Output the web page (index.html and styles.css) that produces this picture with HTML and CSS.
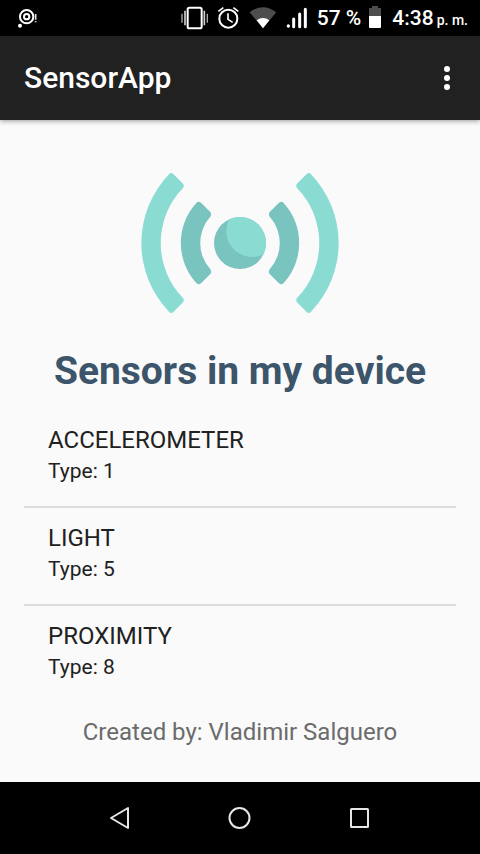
FILE: index.html
```html
<!DOCTYPE html>
<html lang="en">
<head>
<meta charset="utf-8">
<meta name="viewport" content="width=device-width, initial-scale=1">
<title>SensorApp</title>
<link rel="stylesheet" href="styles.css">
</head>
<body>
<div class="screen">
  <div class="status-bar">
    <svg class="notice" width="24" height="36" viewBox="48 0 72 108" aria-hidden="true">
      <circle cx="80" cy="50" r="20" fill="none" stroke="#fff" stroke-width="6"/>
      <circle cx="80" cy="50" r="8" fill="none" stroke="#fff" stroke-width="6"/>
      <circle cx="60" cy="77" r="6" fill="#fff"/>
      <path d="M107 42v17M107 63v4" stroke="#ddd" stroke-width="5"/>
    </svg>
    <svg width="28" height="36" viewBox="33 0 84 108" aria-hidden="true">
      <rect x="53" y="23" width="42" height="62" rx="5" fill="none" stroke="#fff" stroke-width="6"/>
      <path d="M45 32v44M103 32v44" stroke="#ccc" stroke-width="5"/>
      <path d="M36 41v27M112 41v27" stroke="#aaa" stroke-width="4"/>
    </svg>
    <svg width="24" height="36" viewBox="140 0 72 108" aria-hidden="true">
      <g fill="none" stroke="#fff" stroke-width="6">
        <circle cx="174" cy="56" r="27"/>
        <path stroke-width="5" d="M173 40v18l14 9M144 34l15-11M204 34l-15-11"/>
      </g>
    </svg>
    <svg width="28" height="36" viewBox="234 0 84 108" aria-hidden="true">
      <path d="M236 37Q276 6 316 37L276 85Z" fill="#4d4d4d"/>
      <path d="M257 61Q276 47 295 61L276 85Z" fill="#fff"/>
    </svg>
    <svg width="24" height="36" viewBox="342 0 72 108" aria-hidden="true">
      <circle cx="352" cy="78" r="5" fill="#fff"/>
      <path d="M368 57v23M386 42v38M403 28v52" stroke="#fff" stroke-width="9" stroke-linecap="round"/>
    </svg>
    <span class="battery-level">57 %</span>
    <svg class="battery" width="12" height="36" viewBox="174 0 36 108" aria-hidden="true">
      <path d="M174 49V24h9v-6h18v6h9v25Z" fill="#4d4d4d"/>
      <path d="M174 48h36v33q0 3-3 3h-30q-3 0-3-3Z" fill="#fff"/>
    </svg>
    <span class="clock">4:38<small class="period">p. m.</small></span>
  </div>

  <header class="app-bar">
    <h1 class="app-title">SensorApp</h1>
    <button class="menu-button" type="button" aria-label="More options">
      <svg width="8" height="26" viewBox="0 0 8 26" fill="#fff" aria-hidden="true">
        <circle cx="4" cy="4" r="3"/><circle cx="4" cy="13" r="3"/><circle cx="4" cy="22" r="3"/>
      </svg>
    </button>
  </header>

  <main class="content">
    <svg class="logo" width="198" height="140" viewBox="33 39 594 420" aria-hidden="true">
      <defs>
        <clipPath id="ball"><circle cx="330" cy="249" r="78"/></clipPath>
        <path id="wave-outer" d="M117 43Q123 36 130 42L159 71Q164 77 159 84A237 237 0 0 0 159 414Q164 421 159 427L130 456Q123 462 117 455A297 297 0 0 1 117 43Z"/>
        <path id="wave-inner" d="M199 129Q206 122 213 128L241 156Q246 163 241 170A118 118 0 0 0 241 328Q246 335 241 342L213 370Q206 376 199 369A178 178 0 0 1 199 129Z"/>
      </defs>
      <g fill="#8adcd3">
        <use href="#wave-outer"/>
        <use href="#wave-outer" transform="translate(660 0) scale(-1 1)"/>
      </g>
      <g fill="#7ac4bf">
        <use href="#wave-inner"/>
        <use href="#wave-inner" transform="translate(660 0) scale(-1 1)"/>
        <circle cx="330" cy="249" r="78"/>
      </g>
      <circle cx="367" cy="213" r="78" fill="#8adcd3" clip-path="url(#ball)"/>
    </svg>
    <h2 class="heading">Sensors in my device</h2>
    <ul class="sensors">
      <li class="sensor"><span class="name">ACCELEROMETER</span><span class="type">Type: 1</span></li>
      <li class="sensor"><span class="name">LIGHT</span><span class="type">Type: 5</span></li>
      <li class="sensor"><span class="name">PROXIMITY</span><span class="type">Type: 8</span></li>
    </ul>
    <footer class="credit">Created by: Vladimir Salguero</footer>
  </main>

  <nav class="nav-bar" aria-label="System">
    <button class="nav-button" type="button" aria-label="Back">
      <svg width="24" height="24" viewBox="0 0 24 24" aria-hidden="true"><path d="M20 2V22L3 12Z"/></svg>
    </button>
    <button class="nav-button" type="button" aria-label="Home">
      <svg width="24" height="24" viewBox="0 0 24 24" aria-hidden="true"><circle cx="11.500" cy="12" r="10"/></svg>
    </button>
    <button class="nav-button" type="button" aria-label="Recent apps">
      <svg width="24" height="24" viewBox="0 0 24 24" aria-hidden="true"><rect x="3" y="3" width="17" height="18" rx="0.500"/></svg>
    </button>
  </nav>
</div>
</body>
</html>
```
FILE: styles.css
```css
* {
  box-sizing: border-box;
}

body {
  margin: 0;
  background: #fafafa;
  color: #212121;
  font-family: Roboto, "Liberation Sans", sans-serif;
}

svg {
  display: block;
  flex: none;
}

button {
  display: flex;
  align-items: center;
  justify-content: center;
  padding: 0;
  border: 0;
  background: none;
}

.screen {
  display: flex;
  flex-direction: column;
  min-height: 100vh;
}

.status-bar {
  display: flex;
  align-items: center;
  gap: 8px;
  padding: 0 12px 0 16px;
  background: #000;
  color: #fff;
  font-size: 21px;
  font-weight: 500;
  line-height: 36px;
  white-space: nowrap;
}

.notice {
  margin-right: auto;
}

.clock {
  margin-left: 3px;
}

.period {
  margin-left: 3px;
  font-size: 14px;
  line-height: 1;
}

.app-bar {
  display: flex;
  align-items: center;
  justify-content: space-between;
  height: 84px;
  padding: 0 16px 0 24px;
  background: #212121;
  color: #fff;
  box-shadow: 0 1px 5px rgba(0, 0, 0, 0.4);
}

.app-title {
  margin: 0;
  font-size: 30px;
  font-weight: 500;
  line-height: 36px;
}

.menu-button {
  width: 34px;
  height: 48px;
}

.content {
  display: flex;
  flex: 1;
  flex-direction: column;
  padding: 53px 24px 24px;
}

.logo {
  align-self: center;
}

.heading {
  margin: 35px 0 15px;
  color: #3c556a;
  font-size: 39px;
  font-weight: 700;
  line-height: 47px;
  text-align: center;
}

.sensors {
  margin: 0;
  padding: 0;
  list-style: none;
}

.sensor {
  display: flex;
  flex-direction: column;
  gap: 5px;
  height: 96px;
  padding: 16px 24px;
}

.sensor + .sensor {
  height: 98px;
  border-top: 2px solid #dcdcdc;
}

.name {
  font-size: 24px;
  line-height: 28px;
}

.type {
  font-size: 21px;
  line-height: 25px;
}

.credit {
  margin-top: 16px;
  color: #6b6b6b;
  font-size: 24px;
  line-height: 28px;
  text-align: center;
}

.nav-bar {
  display: flex;
  justify-content: center;
  height: 72px;
  background: #000;
}

.nav-button {
  flex: 0 1 120px;
}

.nav-button svg {
  fill: none;
  stroke: #e6e6e6;
  stroke-width: 2;
  stroke-linejoin: round;
}
```
